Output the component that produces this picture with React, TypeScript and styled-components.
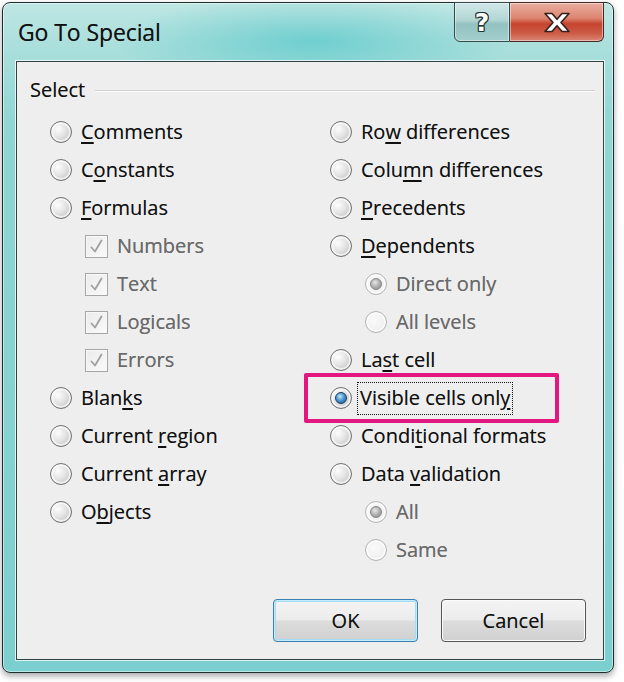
import React from "react";
import styled, { createGlobalStyle } from "styled-components";

const Global = createGlobalStyle`
  html, body { margin: 0; padding: 0; background: #ffffff; }
  body { font-family: "Open Sans", "Noto Sans", sans-serif; }
  #root { width: 624px; height: 682px; overflow: hidden; }
`;

const Page = styled.div`
  padding: 2px 0 0 2px;
`;

const Window = styled.div`
  box-sizing: border-box;
  width: 612px;
  height: 671px;
  border: 1px solid #1f2c2d;
  border-radius: 8px;
  background:
    radial-gradient(ellipse 200px 45px at 310px 38px, rgba(70, 195, 198, 0.6), rgba(70, 195, 198, 0) 100%),
    linear-gradient(to bottom, #bfe6e3 0px, #aadfdc 45px, #8fd6d4 120px, #7ccfcf 100%);
  box-shadow: inset 0 0 0 1px rgba(255, 255, 255, 0.5), 0 3px 6px rgba(0, 0, 0, 0.35);
  display: flex;
  flex-direction: column;
  padding: 0 9px 12px 13px;
`;

const TitleBar = styled.div`
  height: 58px;
  display: flex;
  align-items: flex-start;
`;

const TitleText = styled.div`
  margin-top: 13px;
  margin-left: 2px;
  font-size: 23px;
  line-height: 32px;
  color: #101010;
  letter-spacing: -0.1px;
  text-shadow: 0 0 0.6px rgba(0, 0, 0, 0.5);
`;

const CaptionGroup = styled.div`
  margin-left: auto;
  margin-top: -1px;
  display: flex;
`;

const CaptionButton = styled.div<{ $kind: "help" | "close" }>`
  box-sizing: border-box;
  height: 40px;
  width: ${(p) => (p.$kind === "help" ? "56px" : "94px")};
  display: flex;
  align-items: center;
  justify-content: center;
  border: 1px solid ${(p) => (p.$kind === "help" ? "#34494a" : "#472825")};
  border-left-width: ${(p) => (p.$kind === "help" ? "1px" : "0")};
  border-radius: ${(p) => (p.$kind === "help" ? "0 0 0 6px" : "0 0 6px 0")};
  background: ${(p) =>
    p.$kind === "help"
      ? "linear-gradient(to bottom, #d0e8e7 0%, #b2d6d4 45%, #93c2c0 55%, #a3cfcd 100%)"
      : "linear-gradient(to bottom, #e9ad9f 0%, #dc8571 40%, #c6442e 55%, #cc5c47 80%, #da8876 100%)"};
  box-shadow: inset 0 0 0 1px rgba(255, 255, 255, 0.45);
`;

const HelpGlyph = styled.span`
  font-family: "DejaVu Sans", sans-serif;
  font-weight: bold;
  font-size: 25px;
  line-height: 25px;
  color: #ffffff;
  text-shadow: 1px 0 0 #263435, -1px 0 0 #263435, 0 1px 0 #263435, 0 -1px 0 #263435,
    1px 1px 0 #263435, -1px -1px 0 #263435, 1px -1px 0 #263435, -1px 1px 0 #263435;
`;

const Client = styled.div`
  flex: 1;
  display: flex;
  flex-direction: column;
  border: 1px solid #2f4344;
  box-shadow: 0 0 0 1px rgba(255, 255, 255, 0.75);
  background: #eeeeee;
  color: #101010;
  font-size: 20px;
  text-shadow: 0 0 0.6px rgba(0, 0, 0, 0.45);
`;

const GroupHeader = styled.div`
  display: flex;
  align-items: center;
  gap: 10px;
  margin-top: 18px;
  padding: 0 8px 0 13px;
  height: 20px;
  line-height: 20px;
`;

const GroupLine = styled.div`
  flex: 1;
  height: 1px;
  background: #d0d0d0;
  border-bottom: 1px solid #fbfbfb;
  margin-top: 1px;
`;

const Columns = styled.div`
  display: grid;
  grid-template-columns: 280px 1fr;
  margin-top: 13px;
  padding-left: 33px;
`;

const Column = styled.div`
  display: flex;
  flex-direction: column;
`;

const Row = styled.div<{ $indent?: boolean; $disabled?: boolean }>`
  position: relative;
  height: 38px;
  display: flex;
  align-items: center;
  padding-left: ${(p) => (p.$indent ? "35px" : "0")};
  color: ${(p) => (p.$disabled ? "#6a6a6a" : "#101010")};
`;

const Label = styled.span<{ $focus?: boolean; $box?: boolean }>`
  margin-left: ${(p) => (p.$focus ? "6px" : p.$box ? "9px" : "9px")};
  padding: ${(p) => (p.$focus ? "2px 2px 3px 2px" : "0")};
  outline: ${(p) => (p.$focus ? "1px dotted #111" : "none")};
  white-space: nowrap;
  line-height: 26px;
`;

const Accel = styled.span`
  text-decoration: underline;
  text-decoration-thickness: 1.5px;
  text-underline-offset: 3px;
`;

const RadioCircle = styled.span<{ $checked?: boolean; $disabled?: boolean }>`
  position: relative;
  box-sizing: border-box;
  flex: none;
  width: 22px;
  height: 22px;
  border-radius: 50%;
  border: 1px solid ${(p) => (p.$disabled ? "#b5b5b5" : "#6f7374")};
  background: ${(p) =>
    p.$disabled
      ? "radial-gradient(circle at 40% 40%, #fafafa, #efefef 70%, #e4e4e4)"
      : "radial-gradient(circle at 35% 35%, #fdfdfd 0%, #e2e2e2 45%, #c8c8c8 75%, #d8d8d8 100%)"};
  box-shadow: inset 0 0 0 2px rgba(255, 255, 255, 0.7);
  &::after {
    content: "";
    display: ${(p) => (p.$checked ? "block" : "none")};
    position: absolute;
    left: 4px;
    top: 4px;
    width: 12px;
    height: 12px;
    border-radius: 50%;
    border: 1px solid ${(p) => (p.$disabled ? "#868686" : "#1a3a58")};
    box-sizing: border-box;
    background: ${(p) =>
      p.$disabled
        ? "radial-gradient(circle at 40% 35%, #e6e6e6 0%, #ababab 55%, #888888 100%)"
        : "radial-gradient(circle at 40% 35%, #c8e8ff 0%, #4a98d6 45%, #195690 100%)"};
  }
`;

const CheckBox = styled.span`
  box-sizing: border-box;
  flex: none;
  width: 23px;
  height: 23px;
  border: 1px solid #a6a6a6;
  background: linear-gradient(135deg, #ebebeb, #fafafa);
  box-shadow: inset 0 0 0 1px #f8f8f8;
  display: flex;
  align-items: center;
  justify-content: center;
`;

const Highlight = styled.div`
  position: absolute;
  left: -26px;
  top: -6px;
  width: 255px;
  height: 50px;
  box-sizing: border-box;
  border: 4px solid #e2177f;
  border-radius: 2px;
  pointer-events: none;
`;

const ButtonRow = styled.div`
  margin-top: auto;
  display: flex;
  justify-content: flex-end;
  gap: 23px;
  padding: 0 17px 17px 0;
`;

const PushButton = styled.div<{ $default?: boolean }>`
  box-sizing: border-box;
  width: 145px;
  height: 43px;
  display: flex;
  align-items: center;
  justify-content: center;
  border: 1px solid ${(p) => (p.$default ? "#3a7fb0" : "#555555")};
  border-radius: 4px;
  background: linear-gradient(to bottom, #f4f4f4 0%, #ececec 48%, #dcdcdc 52%, #d0d0d0 100%);
  box-shadow: ${(p) =>
    p.$default ? "inset 0 0 0 1px #c6ecfb, inset 0 0 0 2px #a5dcf5" : "inset 0 0 0 1px #fbfbfb"};
  font-size: 20px;
  color: #101010;
`;

type Item = {
  pre: string;
  acc?: string;
  post?: string;
  kind: "radio" | "check";
  checked?: boolean;
  disabled?: boolean;
  indent?: boolean;
  focus?: boolean;
};

const leftItems: Item[] = [
  { pre: "", acc: "C", post: "omments", kind: "radio" },
  { pre: "C", acc: "o", post: "nstants", kind: "radio" },
  { pre: "", acc: "F", post: "ormulas", kind: "radio" },
  { pre: "Numbers", kind: "check", checked: true, disabled: true, indent: true },
  { pre: "Text", kind: "check", checked: true, disabled: true, indent: true },
  { pre: "Logicals", kind: "check", checked: true, disabled: true, indent: true },
  { pre: "Errors", kind: "check", checked: true, disabled: true, indent: true },
  { pre: "Blan", acc: "k", post: "s", kind: "radio" },
  { pre: "Current ", acc: "r", post: "egion", kind: "radio" },
  { pre: "Current ", acc: "a", post: "rray", kind: "radio" },
  { pre: "O", acc: "b", post: "jects", kind: "radio" },
];

const rightItems: Item[] = [
  { pre: "Ro", acc: "w", post: " differences", kind: "radio" },
  { pre: "Colu", acc: "m", post: "n differences", kind: "radio" },
  { pre: "", acc: "P", post: "recedents", kind: "radio" },
  { pre: "", acc: "D", post: "ependents", kind: "radio" },
  { pre: "Direct only", kind: "radio", checked: true, disabled: true, indent: true },
  { pre: "All levels", kind: "radio", disabled: true, indent: true },
  { pre: "La", acc: "s", post: "t cell", kind: "radio" },
  { pre: "Visible cells onl", acc: "y", post: "", kind: "radio", checked: true, focus: true },
  { pre: "Condi", acc: "t", post: "ional formats", kind: "radio" },
  { pre: "Data ", acc: "v", post: "alidation", kind: "radio" },
  { pre: "All", kind: "radio", checked: true, disabled: true, indent: true },
  { pre: "Same", kind: "radio", disabled: true, indent: true },
];

const CheckMark = () => (
  <svg width="15" height="15" viewBox="0 0 15 15">
    <path d="M2.5 8.5 L6 12.5 L12.5 1.5" fill="none" stroke="#a0a0a0" strokeWidth="1.8" strokeLinecap="round" strokeLinejoin="round" />
  </svg>
);

const CloseGlyph = () => (
  <svg width="28" height="21" viewBox="0 0 28 21">
    <path
      d="M2 1.5 H9 L14 7.3 L19 1.5 H26 L18 10.5 L26 19.5 H19 L14 13.7 L9 19.5 H2 L10 10.5 Z"
      fill="#ffffff"
      stroke="#35201e"
      strokeWidth="1.6"
      strokeLinejoin="round"
    />
  </svg>
);

const Entry = ({ item }: { item: Item }) => (
  <Row $indent={item.indent} $disabled={item.disabled}>
    {item.focus && <Highlight />}
    {item.kind === "radio" ? (
      <RadioCircle $checked={item.checked} $disabled={item.disabled} />
    ) : (
      <CheckBox>{item.checked && <CheckMark />}</CheckBox>
    )}
    <Label $focus={item.focus} $box={item.kind === "check"}>
      {item.pre}
      {item.acc && <Accel>{item.acc}</Accel>}
      {item.post}
    </Label>
  </Row>
);

export default function App() {
  return (
    <>
      <Global />
      <Page>
        <Window>
          <TitleBar>
            <TitleText>Go To Special</TitleText>
            <CaptionGroup>
              <CaptionButton $kind="help">
                <HelpGlyph>?</HelpGlyph>
              </CaptionButton>
              <CaptionButton $kind="close">
                <CloseGlyph />
              </CaptionButton>
            </CaptionGroup>
          </TitleBar>
          <Client>
            <GroupHeader>
              <span>Select</span>
              <GroupLine />
            </GroupHeader>
            <Columns>
              <Column>
                {leftItems.map((it, i) => (
                  <Entry key={i} item={it} />
                ))}
              </Column>
              <Column>
                {rightItems.map((it, i) => (
                  <Entry key={i} item={it} />
                ))}
              </Column>
            </Columns>
            <ButtonRow>
              <PushButton $default>OK</PushButton>
              <PushButton>Cancel</PushButton>
            </ButtonRow>
          </Client>
        </Window>
      </Page>
    </>
  );
}
